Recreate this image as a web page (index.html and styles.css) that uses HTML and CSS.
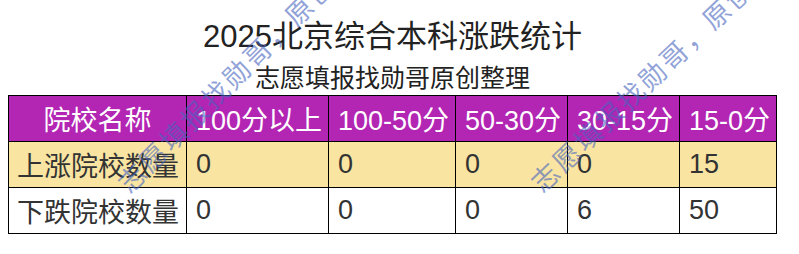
FILE: index.html
```html
<!DOCTYPE html>
<html lang="zh-CN">
<head>
<meta charset="utf-8">
<title>2025北京综合本科涨跌统计</title>
<link rel="stylesheet" href="styles.css">
</head>
<body>
<div class="page">
  <h1 class="title">2025北京综合本科涨跌统计</h1>
  <h2 class="subtitle">志愿填报找勋哥原创整理</h2>
  <table class="stats">
    <colgroup>
      <col class="c1"><col class="c2"><col class="c3"><col class="c4"><col class="c5"><col class="c6">
    </colgroup>
    <thead>
      <tr class="head">
        <th class="name">院校名称</th>
        <th>100分以上</th>
        <th>100-50分</th>
        <th>50-30分</th>
        <th>30-15分</th>
        <th>15-0分</th>
      </tr>
    </thead>
    <tbody>
      <tr class="up">
        <td>上涨院校数量</td><td>0</td><td>0</td><td>0</td><td>0</td><td>15</td>
      </tr>
      <tr class="down">
        <td>下跌院校数量</td><td>0</td><td>0</td><td>0</td><td>6</td><td>50</td>
      </tr>
    </tbody>
  </table>
  <span class="mark mark-a">志愿填报找勋哥，原创整理</span>
  <span class="mark mark-b">志愿填报找勋哥，原创整理</span>
</div>
</body>
</html>
```

FILE: styles.css
```css
html, body {
  margin: 0;
  padding: 0;
  overflow: hidden;
  background: #ffffff;
}
body {
  font-family: "Liberation Sans", "Noto Sans CJK SC", sans-serif;
  color: #222222;
}
.page {
  position: relative;
  width: 769px;
  padding: 19px 8px 0;
}
.title {
  margin: 0;
  font-size: 31px;
  line-height: 36px;
  font-weight: normal;
  text-align: center;
  color: #222222;
}
.subtitle {
  margin: 7px 0 0;
  font-size: 25px;
  line-height: 33px;
  font-weight: normal;
  text-align: center;
  color: #222222;
}
.stats {
  width: 769px;
  table-layout: fixed;
  border-collapse: collapse;
  font-size: 27px;
}
.c1 { width: 178px; }
.c2 { width: 142px; }
.c3 { width: 127px; }
.c4 { width: 112px; }
.c5 { width: 112px; }
.c6 { width: 97px; }
.stats th, .stats td {
  border: 1px solid #000000;
  padding: 0 0 0 9px;
  height: 45px;
  text-align: left;
  white-space: nowrap;
  font-weight: normal;
  vertical-align: middle;
}
.stats th.name {
  text-align: center;
  padding: 0;
}
.head th {
  background: #b325b3;
  color: #ffffff;
}
.up td {
  background: #f9e4a2;
  color: #333333;
}
.down td {
  background: #ffffff;
  color: #333333;
}
.stats tbody td:first-child {
  padding-left: 8px;
}
.mark {
  position: absolute;
  font-family: "Noto Sans CJK SC", sans-serif;
  font-size: 27px;
  line-height: 28px;
  letter-spacing: 2.5px;
  color: rgba(70, 100, 190, 0.6);
  white-space: nowrap;
  transform-origin: 0 50%;
  pointer-events: none;
}
.mark-a {
  left: 122px;
  top: 173px;
  transform: rotate(-45deg);
}
.mark-b {
  left: 535px;
  top: 172px;
  transform: rotate(-43.5deg);
}
```
